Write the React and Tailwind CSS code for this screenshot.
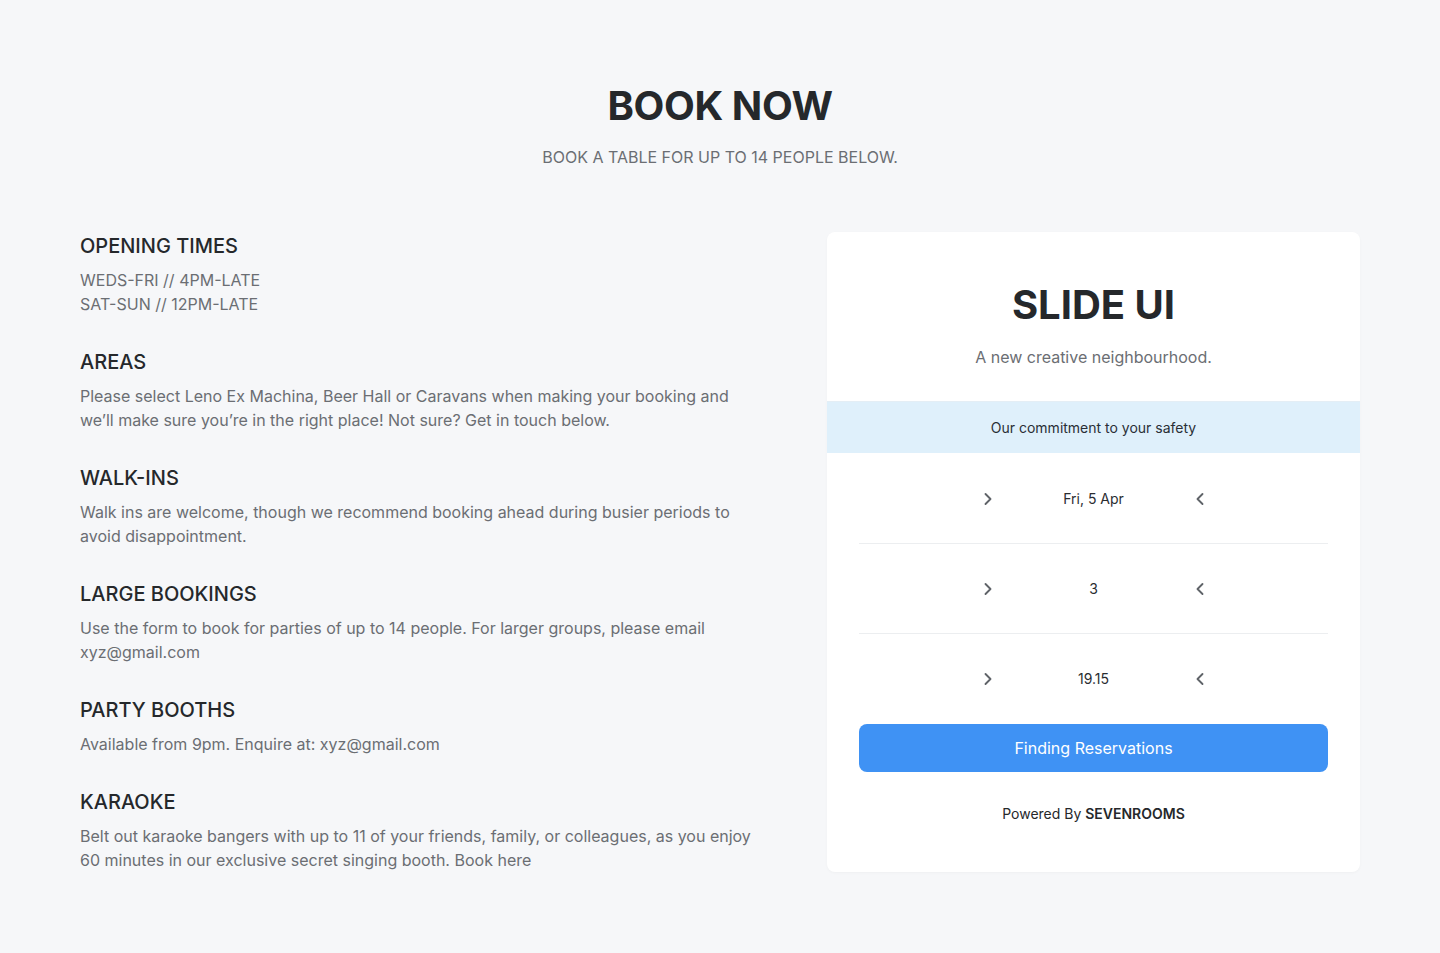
import { ChevronLeft, ChevronRight } from "lucide-react";

const sections = [
  {
    title: "OPENING TIMES",
    body: ["WEDS-FRI // 4PM-LATE", "SAT-SUN // 12PM-LATE"],
  },
  {
    title: "AREAS",
    body: [
      "Please select Leno Ex Machina, Beer Hall or Caravans when making your booking and we’ll make sure you’re in the right place! Not sure? Get in touch below.",
    ],
  },
  {
    title: "WALK-INS",
    body: [
      "Walk ins are welcome, though we recommend booking ahead during busier periods to avoid disappointment.",
    ],
  },
  {
    title: "LARGE BOOKINGS",
    body: [
      "Use the form to book for parties of up to 14 people. For larger groups, please email xyz@gmail.com",
    ],
  },
  {
    title: "PARTY BOOTHS",
    body: ["Available from 9pm. Enquire at: xyz@gmail.com"],
  },
  {
    title: "KARAOKE",
    body: [
      "Belt out karaoke bangers with up to 11 of your friends, family, or colleagues, as you enjoy 60 minutes in our exclusive secret singing booth. Book here",
    ],
  },
];

const pickers = ["Fri, 5 Apr", "3", "19.15"];

const PickerRow = ({ value, last }) => (
  <div className={`h-[90px] flex items-center justify-center ${last ? "" : "border-b border-[#eceef0]"}`}>
    <button className="w-6 h-6 flex items-center justify-center text-[#5f6368]">
      <ChevronRight className="w-5 h-5" strokeWidth={2.25} />
    </button>
    <span className="w-[188px] text-center text-sm text-[#2a2d31]">{value}</span>
    <button className="w-6 h-6 flex items-center justify-center text-[#5f6368]">
      <ChevronLeft className="w-5 h-5" strokeWidth={2.25} />
    </button>
  </div>
);

export default function App() {
  return (
    <div className="min-h-[953px] bg-[#f6f7f9] font-['Inter',sans-serif] text-[#25282b]">
      <header className="pt-[82px] text-center">
        <h1 className="text-[40px] leading-[48px] font-bold tracking-[-0.01em] text-[#25282b]">BOOK NOW</h1>
        <p className="mt-[15px] text-base leading-6 text-[#6b6e73]">BOOK A TABLE FOR UP TO 14 PEOPLE BELOW.</p>
      </header>

      <main className="mx-20 mt-[63px] flex justify-between items-start">
        <div className="w-[678px]">
          {sections.map((s, i) => (
            <section key={s.title} className={i === 0 ? "" : "mt-8"}>
              <h2 className="text-xl leading-7 font-medium text-[#25282b]">{s.title}</h2>
              <div className="mt-2 text-base leading-6 text-[#6b6e73]">
                {s.body.map((line) => (
                  <p key={line}>{line}</p>
                ))}
              </div>
            </section>
          ))}
        </div>

        <div className="w-[533px] bg-white rounded-lg overflow-hidden shadow-[0_1px_3px_rgba(0,0,0,0.03)]">
          <div className="pt-[49px] pb-8 text-center">
            <h2 className="text-[40px] leading-[48px] font-bold text-[#25282b]">SLIDE UI</h2>
            <p className="mt-4 text-base leading-6 text-[#6b6e73]">A new creative neighbourhood.</p>
          </div>
          <div className="h-[52px] flex items-center justify-center bg-[#dff0fb] border-t border-[#e4eef5] text-sm text-[#2a2f36]">
            Our commitment to your safety
          </div>
          <div className="px-8 pt-px">
            {pickers.map((v, i) => (
              <PickerRow key={v} value={v} last={i === pickers.length - 1} />
            ))}
            <button className="w-full h-12 rounded-lg bg-[#3f92f4] text-white text-base font-normal">
              Finding Reservations
            </button>
            <p className="mt-8 mb-12 text-center text-sm leading-5 text-[#25282b]">
              Powered By <span className="font-semibold">SEVENROOMS</span>
            </p>
          </div>
        </div>
      </main>
    </div>
  );
}
